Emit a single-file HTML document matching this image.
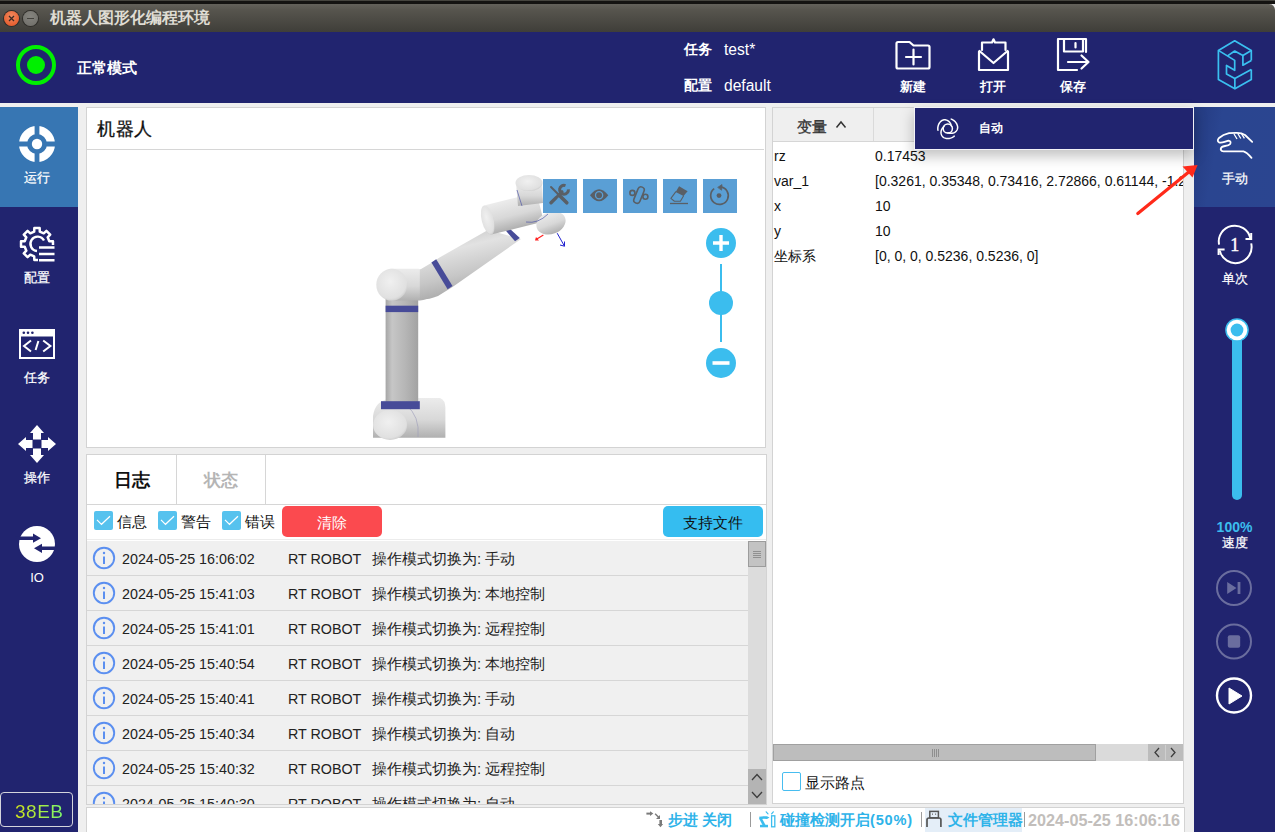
<!DOCTYPE html>
<html><head><meta charset="utf-8">
<style>
*{box-sizing:border-box;margin:0;padding:0}
html,body{width:1275px;height:832px;overflow:hidden;background:#efefef;font-family:"Liberation Sans",sans-serif;color:#222}
.a{position:absolute}
.w{color:#fff}
.ws{-webkit-text-stroke:0.25px #fff}
.b{font-weight:bold}
svg{position:absolute;overflow:visible}
</style></head><body>
<!-- title bar -->
<div class="a" style="left:0;top:0;width:1275px;height:1px;background:#45443e"></div>
<div class="a" style="left:0;top:1px;width:1275px;height:3px;background:#141311"></div>
<div class="a" style="left:0;top:4px;width:1275px;height:28px;background:linear-gradient(#63615a,#57554e 20%,#3f3e39);border-top-right-radius:6px"></div>
<div class="a" style="left:4px;top:11px;width:15px;height:15px;border-radius:50%;background:radial-gradient(circle at 50% 35%,#f08a5f,#e4501f);box-shadow:0 0 0 1px #2f2e2a"></div>
<svg width="20" height="20" style="left:0;top:0"><path d="M9,16 L14,21 M14,16 L9,21" stroke="#3a2a24" stroke-width="1.3"/></svg>
<div class="a" style="left:23px;top:11px;width:15px;height:15px;border-radius:50%;background:radial-gradient(circle at 50% 35%,#85847e,#6d6c67);box-shadow:0 0 0 1px #2f2e2a"></div>
<div class="a" style="left:27px;top:17.8px;width:7px;height:1.3px;background:#44433e"></div>
<div class="a b" style="left:50px;top:8px;font-size:15.5px;line-height:19px;color:#dfdcd3;letter-spacing:0px">机器人图形化编程环境</div>

<!-- header -->
<div class="a" style="left:0;top:32px;width:1275px;height:71px;background:#21246f"></div>
<div class="a" style="left:16px;top:45px;width:40px;height:40px;border-radius:50%;border:4px solid #00f000"></div>
<div class="a" style="left:27px;top:56px;width:18px;height:18px;border-radius:50%;background:#00f000"></div>
<div class="a w b" style="left:77px;top:59.5px;font-size:14.6px;line-height:17px">正常模式</div>
<div class="a w b" style="left:684px;top:41px;font-size:14px;line-height:17px">任务</div>
<div class="a w" style="left:724px;top:41px;font-size:15.6px;line-height:17px">test*</div>
<div class="a w b" style="left:684px;top:77px;font-size:14px;line-height:17px">配置</div>
<div class="a w" style="left:724px;top:77px;font-size:15.6px;line-height:17px">default</div>
<div class="a w b" style="left:896px;top:79px;width:34px;text-align:center;font-size:13px;line-height:16px">新建</div>
<div class="a w b" style="left:976px;top:79px;width:34px;text-align:center;font-size:13px;line-height:16px">打开</div>
<div class="a w b" style="left:1056px;top:79px;width:34px;text-align:center;font-size:13px;line-height:16px">保存</div>
<svg width="1275" height="832" style="left:0;top:0" fill="none" stroke="#fff" stroke-width="2.2" stroke-linejoin="round" stroke-linecap="round">
  <!-- new folder -->
  <path d="M898,42 h11.5 l4,3.5 h14.5 a1.5,1.5 0 0 1 1.5,1.5 v20 a1.5,1.5 0 0 1 -1.5,1.5 h-30 a1.5,1.5 0 0 1 -1.5,-1.5 v-23.5 a1.5,1.5 0 0 1 1.5,-1.5z"/>
  <path d="M906,57 h15 M913.5,49.5 v15"/>
  <!-- open envelope -->
  <path d="M982,50 v-7.5 h10 l1.5,-3.2 l1.5,3.2 h10.5 v7.5"/>
  <path d="M979,51.5 v18.5 h29 v-18.5 M979.5,51 l14,12 l14,-12"/>
  <!-- save -->
  <path d="M1077,70 h-19 v-31 h28 v13"/>
  <path d="M1064,39 v12.5 h19 v-12.5 M1075.5,43 v4.5"/>
  <path d="M1068,62 h20.5 M1081.5,55.5 l7,6.5 l-7,6.5"/>
  <!-- logo -->
  <g stroke="#3ac0f0" stroke-width="1.7" stroke-linecap="butt">
    <path d="M1251.3,60.6 L1251.3,50.5 L1234.7,40.8 L1218.4,50.4 L1218.4,79.6 L1234.9,88.8 L1251.3,79.6 L1251.3,69.5"/>
    <path d="M1218.4,50.4 L1234.7,60.4 L1234.7,70.3 L1226.5,65.5 L1226.5,74 L1234.8,78.6 L1251.3,69.5"/>
    <path d="M1234.8,78.6 L1234.9,88.8"/>
    <path d="M1227.5,55.9 L1234.7,51 L1242.9,55.6 L1251.3,50.5"/>
    <path d="M1242.9,55.6 L1242.9,65.2 L1251.3,60.6"/>
  </g>
</svg>

<!-- left sidebar -->
<div class="a" style="left:0;top:107px;width:78px;height:725px;background:#21246f"></div>
<div class="a" style="left:0;top:107px;width:78px;height:100px;background:#3776b3"></div>
<div class="a w ws" style="left:0;top:170px;width:74px;text-align:center;font-size:13px;line-height:16px">运行</div>
<div class="a w ws" style="left:0;top:270px;width:74px;text-align:center;font-size:13px;line-height:16px">配置</div>
<div class="a w ws" style="left:0;top:370px;width:74px;text-align:center;font-size:13px;line-height:16px">任务</div>
<div class="a w ws" style="left:0;top:470px;width:74px;text-align:center;font-size:13px;line-height:16px">操作</div>
<div class="a w" style="left:0;top:570px;width:74px;text-align:center;font-size:13px;line-height:16px">IO</div>
<div class="a" style="left:0;top:792px;width:73px;height:35px;border:1.5px solid #d4d4dc;border-radius:4px"></div>
<div class="a" style="left:15px;top:800px;font-size:19px;letter-spacing:0.5px;line-height:24px;background:linear-gradient(90deg,#d2e21a,#7cf56c);-webkit-background-clip:text;background-clip:text;color:transparent">38EB</div>

<!-- right sidebar -->
<div class="a" style="left:1194px;top:107px;width:81px;height:725px;background:#21246f"></div>
<div class="a" style="left:1194px;top:107px;width:81px;height:100px;background:linear-gradient(100deg,#243a80,#2a4590 30%,#2b4590)"></div>
<div class="a w ws" style="left:1194px;top:170.5px;width:81px;text-align:center;font-size:13px;line-height:16px">手动</div>
<div class="a w ws" style="left:1194px;top:270.5px;width:81px;text-align:center;font-size:13px;line-height:16px">单次</div>
<div class="a b" style="left:1194px;top:520px;width:81px;text-align:center;font-size:14px;line-height:15px;color:#3bbdee">100%</div>
<div class="a w ws" style="left:1194px;top:535px;width:81px;text-align:center;font-size:13px;line-height:16px">速度</div>


<!-- robot panel -->
<div class="a" style="left:86px;top:107px;width:680px;height:341px;background:#fff;border:1px solid #d3d3d3"></div>

<svg width="1275" height="832" style="left:0;top:0">
<defs>
<linearGradient id="gcol" x1="0" x2="1" y1="0" y2="0"><stop offset="0" stop-color="#a6a6a6"/><stop offset="0.2" stop-color="#c6c6c6"/><stop offset="0.6" stop-color="#b6b6b6"/><stop offset="1" stop-color="#a2a2a2"/></linearGradient>
<linearGradient id="garm" x1="0" x2="0.35" y1="0" y2="1"><stop offset="0" stop-color="#bdbdbd"/><stop offset="0.35" stop-color="#e2e2e2"/><stop offset="0.7" stop-color="#c6c6c6"/><stop offset="1" stop-color="#a4a4a4"/></linearGradient>
<radialGradient id="gcap" cx="0.45" cy="0.4" r="0.7"><stop offset="0" stop-color="#f0f0f0"/><stop offset="0.75" stop-color="#e0e0e0"/><stop offset="1" stop-color="#bcbcbc"/></radialGradient>
<linearGradient id="gbody" x1="0" x2="0" y1="0" y2="1"><stop offset="0" stop-color="#ececec"/><stop offset="0.55" stop-color="#d8d8d8"/><stop offset="1" stop-color="#b0b0b0"/></linearGradient>
</defs>
<!-- base -->
<path d="M373,437.7 L373,416 Q375,400 392,398 L440,398 Q445.4,400 445.4,408 L445.4,437.7 Z" fill="url(#gbody)"/>
<ellipse cx="390.1" cy="425" rx="17" ry="15" fill="url(#gcap)"/>
<path d="M406,405 Q420,416 418,437" stroke="#9a9ab8" stroke-width="0.6" fill="none"/>
<!-- column -->
<rect x="385.6" y="298" width="32.6" height="104" fill="url(#gcol)"/>
<rect x="381" y="401.2" width="38.8" height="8" fill="#474b98"/>
<rect x="385.6" y="305.7" width="32.6" height="6.4" fill="#474b98"/>
<!-- shoulder housing -->
<path d="M390,268.7 L418,268.7 Q432,270 434,284 Q434,299 420,300.5 L390,300.5 Z" fill="url(#gbody)"/>
<ellipse cx="391.8" cy="284.7" rx="15.5" ry="16" fill="url(#gcap)"/>
<!-- upper arm -->
<path d="M419.8,269.8 L431.2,263 L439.5,257.5 L488,230 L521,239 L452.5,287 L438,296 Q428,300 419.8,299.5 Z" fill="url(#garm)"/>
<path d="M431.4,262.4 L436.2,259.2 L452.5,286 L447.6,289.2 Z" fill="#474b98"/>
<path d="M504.4,229 L509.3,228.3 L519.8,238 L515,241.3 Z" fill="#474b98"/>
<!-- elbow housing -->
<g transform="translate(512,214) rotate(-14)">
<rect x="-29" y="-15" width="58" height="30" rx="6" fill="url(#gbody)"/>
<ellipse cx="-25" cy="0" rx="6" ry="15" fill="url(#gcap)"/>
</g>
<!-- wrist 1 -->
<path d="M516,183 L542,183 L543,203 L518,206 Z" fill="url(#gbody)"/>
<ellipse cx="529" cy="183" rx="13.5" ry="8" fill="url(#gcap)"/>
<path d="M517,190 Q520,200 522,206" stroke="#5058a8" stroke-width="0.7" fill="none"/>
<!-- wrist 2 -->
<ellipse cx="551" cy="223" rx="15" ry="11" transform="rotate(-20 551 223)" fill="url(#gbody)"/>
<path d="M526,222 Q538,224 548,214" stroke="#5058a8" stroke-width="0.7" fill="none"/>
<!-- axes -->
<path d="M543.4,235 L536,239.5" stroke="#ff2020" stroke-width="1.2"/>
<path d="M536,237 L535,240.5 L539,240.5" fill="#ff2020"/>
<path d="M557.2,233.2 L564.5,246.2 M560,245 L564.5,246.2 L564.5,241.5" stroke="#2020d0" stroke-width="1" fill="none"/>
</svg>
<div class="a" style="left:97px;top:118px;font-size:18px;letter-spacing:0.6px;line-height:22px;-webkit-text-stroke:0.3px #111;color:#111">机器人</div>
<div class="a" style="left:87px;top:149px;width:677px;height:1px;background:#d6d6d6"></div>
<div class="a" style="left:543px;top:179px;width:34px;height:34px;background:#5a9fd5"></div>
<div class="a" style="left:583px;top:179px;width:34px;height:34px;background:#5a9fd5"></div>
<div class="a" style="left:623px;top:179px;width:34px;height:34px;background:#5a9fd5"></div>
<div class="a" style="left:663px;top:179px;width:34px;height:34px;background:#5a9fd5"></div>
<div class="a" style="left:703px;top:179px;width:34px;height:34px;background:#5a9fd5"></div>
<div class="a" style="left:706px;top:228px;width:30px;height:30px;border-radius:50%;background:#3bbdee"></div>
<div class="a" style="left:720px;top:264px;width:2.2px;height:78px;background:#3bbdee"></div>
<div class="a" style="left:709px;top:290.5px;width:24px;height:24px;border-radius:50%;background:#3bbdee"></div>
<div class="a" style="left:706px;top:348px;width:30px;height:30px;border-radius:50%;background:#3bbdee"></div>

<!-- log panel -->
<div class="a" style="left:86px;top:454px;width:681px;height:351px;background:#fff;border:1px solid #d3d3d3"></div>
<div class="a" style="left:87px;top:504px;width:679px;height:1px;background:#d6d6d6"></div>
<div class="a" style="left:176px;top:455px;width:1px;height:49px;background:#d6d6d6"></div>
<div class="a" style="left:265px;top:455px;width:1px;height:49px;background:#d6d6d6"></div>
<div class="a b" style="left:87px;top:470px;width:89px;text-align:center;font-size:18px;line-height:21px;color:#111">日志</div>
<div class="a b" style="left:177px;top:470px;width:88px;text-align:center;font-size:17px;line-height:21px;color:#b5b5b5">状态</div>
<div class="a" style="left:87px;top:539px;width:679px;height:1px;background:#ececec"></div>
<div class="a" style="left:282px;top:506px;width:100px;height:31px;border-radius:5px;background:#fb4a4f;color:#fff;font-size:15px;line-height:33px;text-align:center">清除</div>
<div class="a" style="left:663px;top:506px;width:100px;height:31px;border-radius:5px;background:#35bdf0;color:#111;font-size:15px;line-height:33px;text-align:center">支持文件</div>
<div class="a" style="left:117px;top:512.5px;font-size:14.8px;line-height:18px;color:#111">信息</div>
<div class="a" style="left:181px;top:512.5px;font-size:14.8px;line-height:18px;color:#111">警告</div>
<div class="a" style="left:245px;top:512.5px;font-size:14.8px;line-height:18px;color:#111">错误</div>
<div class="a" style="left:94px;top:511px;width:19px;height:19px;border-radius:2px;background:#56c2ee"></div>
<div class="a" style="left:158px;top:511px;width:19px;height:19px;border-radius:2px;background:#56c2ee"></div>
<div class="a" style="left:222px;top:511px;width:19px;height:19px;border-radius:2px;background:#56c2ee"></div>
<div id="rows" class="a" style="left:87px;top:541px;width:661px;height:263px;overflow:hidden;background:#f0f0f0">
<div class="a" style="left:0;top:0px;width:661px;height:35px;border-bottom:1px solid #d6d6d6"><div class="a" style="left:35px;top:9px;font-size:14.3px;line-height:18px;color:#222">2024-05-25 16:06:02</div><div class="a" style="left:201px;top:9px;font-size:14.3px;line-height:18px;color:#222">RT ROBOT</div><div class="a" style="left:285px;top:9px;font-size:14.3px;line-height:18px;color:#222;font-size:15px">操作模式切换为: 手动</div></div>
<div class="a" style="left:0;top:35px;width:661px;height:35px;border-bottom:1px solid #d6d6d6"><div class="a" style="left:35px;top:9px;font-size:14.3px;line-height:18px;color:#222">2024-05-25 15:41:03</div><div class="a" style="left:201px;top:9px;font-size:14.3px;line-height:18px;color:#222">RT ROBOT</div><div class="a" style="left:285px;top:9px;font-size:14.3px;line-height:18px;color:#222;font-size:15px">操作模式切换为: 本地控制</div></div>
<div class="a" style="left:0;top:70px;width:661px;height:35px;border-bottom:1px solid #d6d6d6"><div class="a" style="left:35px;top:9px;font-size:14.3px;line-height:18px;color:#222">2024-05-25 15:41:01</div><div class="a" style="left:201px;top:9px;font-size:14.3px;line-height:18px;color:#222">RT ROBOT</div><div class="a" style="left:285px;top:9px;font-size:14.3px;line-height:18px;color:#222;font-size:15px">操作模式切换为: 远程控制</div></div>
<div class="a" style="left:0;top:105px;width:661px;height:35px;border-bottom:1px solid #d6d6d6"><div class="a" style="left:35px;top:9px;font-size:14.3px;line-height:18px;color:#222">2024-05-25 15:40:54</div><div class="a" style="left:201px;top:9px;font-size:14.3px;line-height:18px;color:#222">RT ROBOT</div><div class="a" style="left:285px;top:9px;font-size:14.3px;line-height:18px;color:#222;font-size:15px">操作模式切换为: 本地控制</div></div>
<div class="a" style="left:0;top:140px;width:661px;height:35px;border-bottom:1px solid #d6d6d6"><div class="a" style="left:35px;top:9px;font-size:14.3px;line-height:18px;color:#222">2024-05-25 15:40:41</div><div class="a" style="left:201px;top:9px;font-size:14.3px;line-height:18px;color:#222">RT ROBOT</div><div class="a" style="left:285px;top:9px;font-size:14.3px;line-height:18px;color:#222;font-size:15px">操作模式切换为: 手动</div></div>
<div class="a" style="left:0;top:175px;width:661px;height:35px;border-bottom:1px solid #d6d6d6"><div class="a" style="left:35px;top:9px;font-size:14.3px;line-height:18px;color:#222">2024-05-25 15:40:34</div><div class="a" style="left:201px;top:9px;font-size:14.3px;line-height:18px;color:#222">RT ROBOT</div><div class="a" style="left:285px;top:9px;font-size:14.3px;line-height:18px;color:#222;font-size:15px">操作模式切换为: 自动</div></div>
<div class="a" style="left:0;top:210px;width:661px;height:35px;border-bottom:1px solid #d6d6d6"><div class="a" style="left:35px;top:9px;font-size:14.3px;line-height:18px;color:#222">2024-05-25 15:40:32</div><div class="a" style="left:201px;top:9px;font-size:14.3px;line-height:18px;color:#222">RT ROBOT</div><div class="a" style="left:285px;top:9px;font-size:14.3px;line-height:18px;color:#222;font-size:15px">操作模式切换为: 远程控制</div></div>
<div class="a" style="left:0;top:245px;width:661px;height:35px;border-bottom:1px solid #d6d6d6"><div class="a" style="left:35px;top:9px;font-size:14.3px;line-height:18px;color:#222">2024-05-25 15:40:30</div><div class="a" style="left:201px;top:9px;font-size:14.3px;line-height:18px;color:#222">RT ROBOT</div><div class="a" style="left:285px;top:9px;font-size:14.3px;line-height:18px;color:#222;font-size:15px">操作模式切换为: 自动</div></div>

</div>
<div class="a" style="left:748px;top:541px;width:18px;height:263px;background:#dcdcdc"></div>
<div class="a" style="left:748px;top:541px;width:18px;height:26px;background:#c3c3c3;border:1px solid #9c9c9c"></div>
<div class="a" style="left:748px;top:769px;width:18px;height:35px;background:#b4b4b4"></div>

<!-- variables panel -->
<div class="a" style="left:772px;top:107px;width:412px;height:697px;background:#fff;border:1px solid #d3d3d3"></div>
<div class="a" style="left:773px;top:108px;width:410px;height:34px;background:#efefef;border-bottom:1px solid #d6d6d6"></div>
<div class="a" style="left:873px;top:108px;width:1px;height:33px;background:#dadada"></div>
<div class="a" style="left:797px;top:117.5px;font-size:15px;line-height:18px;color:#333;-webkit-text-stroke:0.35px #333">变量</div>
<div class="a" style="left:773px;top:143px;width:410px;height:600px;overflow:hidden"><div class="a" style="left:1px;top:4px;font-size:14px;line-height:18px;color:#111;white-space:nowrap">rz</div><div class="a" style="left:102px;top:4px;font-size:14px;line-height:18px;color:#111;white-space:nowrap">0.17453</div><div class="a" style="left:1px;top:29px;font-size:14px;line-height:18px;color:#111;white-space:nowrap">var_1</div><div class="a" style="left:102px;top:29px;font-size:14px;line-height:18px;color:#111;white-space:nowrap">[0.3261, 0.35348, 0.73416, 2.72866, 0.61144, -1.2</div><div class="a" style="left:1px;top:54px;font-size:14px;line-height:18px;color:#111;white-space:nowrap">x</div><div class="a" style="left:102px;top:54px;font-size:14px;line-height:18px;color:#111;white-space:nowrap">10</div><div class="a" style="left:1px;top:79px;font-size:14px;line-height:18px;color:#111;white-space:nowrap">y</div><div class="a" style="left:102px;top:79px;font-size:14px;line-height:18px;color:#111;white-space:nowrap">10</div><div class="a" style="left:1px;top:104px;font-size:14px;line-height:18px;color:#111;white-space:nowrap">坐标系</div><div class="a" style="left:102px;top:104px;font-size:14px;line-height:18px;color:#111;white-space:nowrap">[0, 0, 0, 0.5236, 0.5236, 0]</div></div>
<div class="a" style="left:773px;top:744px;width:410px;height:17px;background:#dadada"></div>
<div class="a" style="left:773px;top:744px;width:323px;height:17px;background:#bdbdbd;border:1px solid #a0a0a0"></div>
<div class="a" style="left:1148px;top:744px;width:35px;height:17px;background:#bcbcbc"></div>
<div class="a" style="left:782px;top:772px;width:19px;height:19px;border:1.5px solid #47bdf0;border-radius:2px;background:#fff"></div>
<div class="a" style="left:805px;top:774px;font-size:14.7px;line-height:18px;color:#111">显示路点</div>

<!-- status bar -->
<div class="a" style="left:86px;top:807px;width:1099px;height:26px;background:#fff;border:1px solid #d3d3d3"></div>
<div class="a b" style="left:668px;top:811px;font-size:14.6px;line-height:18px;color:#2eb3e9">步进 关闭</div>
<div class="a" style="left:750px;top:812px;width:1px;height:15px;background:#9a9a9a"></div>
<div class="a b" style="left:780px;top:811px;font-size:14.6px;line-height:18px;color:#2eb3e9">碰撞检测开启<span style="letter-spacing:0.8px">(50%)</span></div>
<div class="a" style="left:921px;top:812px;width:1px;height:14.5px;background:#9e9e9e"></div>
<div class="a" style="left:925px;top:808px;width:97px;height:24px;background:#e4eef8"></div>
<div class="a b" style="left:948px;top:811px;font-size:14.6px;line-height:18px;color:#2eb3e9">文件管理器</div>
<div class="a" style="left:1024px;top:812px;width:1px;height:15px;background:#9a9a9a"></div>
<div class="a b" style="left:1028px;top:810px;font-size:16.2px;line-height:20px;color:#c2bebb">2024-05-25 16:06:16</div>

<!-- popup -->
<div class="a" style="left:914px;top:107px;width:280px;height:43px;background:#21246f;border:1px solid #f2f2f6;box-shadow:0 6px 14px rgba(0,0,0,0.25)"></div>
<div class="a w b" style="left:979px;top:121px;font-size:12px;line-height:15px">自动</div>


<svg width="1275" height="832" style="left:0;top:0">
<!-- run target -->
<circle cx="37" cy="144" r="14" fill="none" stroke="#fff" stroke-width="8"/>
<rect x="34.6" y="124" width="4.8" height="40" fill="#3776b3"/>
<rect x="17" y="141.5" width="40" height="5" fill="#3776b3"/>
<circle cx="37" cy="144" r="5.2" fill="#fff"/>
<!-- gear -->
<path d="M34.19,231.72 L34.34,228.02 L39.66,228.02 L39.81,231.72 L43.70,233.33 L46.42,230.82 L50.18,234.58 L47.67,237.30 L49.28,241.19 L52.98,241.34 L52.98,246.66 L49.28,246.81 L47.67,250.70 L50.18,253.42 L46.42,257.18 L43.70,254.67 L39.81,256.28 L39.66,259.98 L34.34,259.98 L34.19,256.28 L30.30,254.67 L27.58,257.18 L23.82,253.42 L26.33,250.70 L24.72,246.81 L21.02,246.66 L21.02,241.34 L24.72,241.19 L26.33,237.30 L23.82,234.58 L27.58,230.82 L30.30,233.33Z" fill="none" stroke="#fff" stroke-width="2.5" stroke-linejoin="round"/>
<path d="M44,240.5 A7.2,7.2 0 1 0 37,251" fill="none" stroke="#fff" stroke-width="2.4"/>
<rect x="38" y="245" width="20" height="18" fill="#21246f"/>
<path d="M39,247.5 h15.5 M39,254 h15.5 M39,260.3 h15.5" stroke="#fff" stroke-width="2.5"/>
<!-- window code -->
<rect x="20" y="330" width="34" height="28" fill="none" stroke="#fff" stroke-width="2"/>
<rect x="19" y="329" width="36" height="7.5" fill="#fff"/>
<circle cx="23.8" cy="332.8" r="1.3" fill="#21246f"/><circle cx="28" cy="332.8" r="1.3" fill="#21246f"/><circle cx="32.4" cy="332.8" r="1.3" fill="#21246f"/>
<path d="M31,340.5 L24,346 L31,351.5 M38.4,341 L35.6,350 M43.2,340.5 L50.4,346 L43.2,351.5" fill="none" stroke="#fff" stroke-width="2"/>
<!-- move arrows -->
<g fill="#fff">
<path d="M37,425 L44,433 L41,433 L41,439.5 L33,439.5 L33,433 L30,433Z"/>
<path d="M37,463 L44,455 L41,455 L41,448.5 L33,448.5 L33,455 L30,455Z"/>
<path d="M18,444 L26,437 L26,440 L32.5,440 L32.5,448 L26,448 L26,451Z"/>
<path d="M56,444 L48,437 L48,440 L41.5,440 L41.5,448 L48,448 L48,451Z"/>
</g>
<!-- IO -->
<circle cx="37" cy="544" r="18" fill="#fff"/>
<path d="M15,536.6 h18 v-3 l8,4.6 l-8,4.6 v-2.8 h-18z" fill="#21246f"/>
<path d="M59,546.5 h-17 v-2.8 l-8,4.5 l8,4.7 v-2.9 h17z" fill="#21246f"/>

<!-- hand -->
<path d="M1252.2,141.9 L1245,135 Q1241.5,132.6 1236,132.8 L1229,133.2 Q1223,134.5 1219,138 Q1216.6,140.8 1219,142.3 Q1221,143 1224.5,141.8 L1228.4,140.6 Q1231.5,140.8 1230.2,144 Q1229,145.6 1225,146 Q1221,146.6 1220.7,149 L1221,150.2 Q1221.5,151.3 1223.5,151.3 L1243.5,151.3 Q1246.5,152 1251.5,157.8" fill="none" stroke="#fff" stroke-width="1.8" stroke-linejoin="round" stroke-linecap="round"/>
<path d="M1234,134 L1237,139 M1237.8,133.5 L1240.8,138.5 M1241.6,133.8 L1244.4,138.3" stroke="#fff" stroke-width="1.3"/>
<!-- repeat once -->
<path d="M1219,244.6 A16,16 0 0 1 1250.3,238" fill="none" stroke="#fff" stroke-width="2"/>
<path d="M1251.2,233 L1251.2,239 L1245.5,239" fill="none" stroke="#fff" stroke-width="2"/>
<path d="M1251.2,243.4 A16,16 0 0 1 1219.8,250.6" fill="none" stroke="#fff" stroke-width="2"/>
<path d="M1218.6,255 L1218.6,249.6 L1224.6,249.6" fill="none" stroke="#fff" stroke-width="2"/>
<text x="1234.8" y="250.6" font-family="Liberation Serif" font-size="18" fill="#fff" stroke="#fff" stroke-width="0.4" text-anchor="middle">1</text>
<!-- slider -->
<rect x="1232" y="330" width="10" height="170" rx="5" fill="#3bbdee"/>
<circle cx="1237" cy="330" r="11.8" fill="#3bbdee"/>
<circle cx="1237" cy="330" r="10.3" fill="#fff"/>
<circle cx="1237" cy="330" r="6.4" fill="#3bbdee"/>
<!-- step / stop / play -->
<circle cx="1234" cy="588" r="17" fill="none" stroke="#6a6d9e" stroke-width="2"/>
<path d="M1227.2,582 L1236.5,588 L1227.2,594Z M1237.6,582 h2.8 v12 h-2.8z" fill="#6a6d9e"/>
<circle cx="1234" cy="641.5" r="17" fill="none" stroke="#6a6d9e" stroke-width="2"/>
<rect x="1227.8" y="635.3" width="12.4" height="12.4" rx="2" fill="#6a6d9e"/>
<circle cx="1234" cy="695.5" r="17" fill="none" stroke="#fff" stroke-width="2.4"/>
<path d="M1229,688 L1242,696 L1229,704Z" fill="#fff" stroke="#fff" stroke-width="1" stroke-linejoin="round"/>

<!-- robot toolbar icons -->
<g fill="none" stroke="#595f66" stroke-linecap="round">
 <path d="M551,187 L560,196" stroke-width="1.9"/>
 <path d="M560.5,196.5 L566.8,202.8" stroke-width="3.6"/>
 <path d="M551,202.8 L556.2,197.6" stroke-width="3.4"/>
 <path d="M557.8,196 L562,191.8" stroke-width="3.2"/>
 <path d="M565.5,185.6 A4.4,4.4 0 1 0 568.4,189.3" stroke-width="3" stroke-linecap="butt"/>
 <path d="M590,195.3 Q599,183.2 608.3,195.3 Q599,207.4 590,195.3Z" fill="#595f66" stroke="none"/>
 <circle cx="599.1" cy="195.3" r="3.6" stroke="#5a9fd5" stroke-width="1.3"/>
 <circle cx="599.1" cy="195.3" r="2.3" fill="#595f66" stroke="none"/>
 <circle cx="632.4" cy="192.9" r="2.5" stroke-width="1.6"/>
 <circle cx="645.4" cy="196.7" r="2.5" stroke-width="1.6"/>
 <rect x="-3.2" y="-8.6" width="6.4" height="17.2" rx="3.2" transform="translate(639,195.1) rotate(22)" stroke-width="1.6"/>
 <path d="M679.1,186.2 L687.6,191.2 L683.5,196 L675.7,191.9Z" fill="#595f66" stroke="none"/>
 <path d="M675.7,191.9 L670.9,198.4 L674.4,201.2 L680.4,201.2 L683.5,196" stroke-width="1.1" stroke-linejoin="round"/>
 <path d="M670,203.5 h18" stroke-width="1.3" stroke-linecap="butt"/>
 <path d="M720.5,186.9 A8.8,8.8 0 1 1 714.2,188.6" stroke-width="1.7" stroke-linecap="butt"/>
 <path d="M718,187.2 L722,184.6 L721.6,189.8Z" fill="#595f66" stroke="#595f66" stroke-width="0.8" stroke-linejoin="round"/>
 <circle cx="719" cy="195.6" r="2.4" fill="#595f66" stroke="none"/>
</g>
<!-- zoom plus/minus -->
<path d="M713,243 h16 M721,235 v16" stroke="#fff" stroke-width="3.4"/>
<path d="M712.5,363 h17" stroke="#fff" stroke-width="3.6"/>

<!-- checkmarks -->
<path d="M97,519.8 L101.5,524.3 L110,516.3 M161,519.8 L165.5,524.3 L174,516.3 M225,519.8 L229.5,524.3 L238,516.3" fill="none" stroke="#fff" stroke-width="1.2"/>

<!-- spiral -->
<g fill="none" stroke="#fff" stroke-width="1.5" stroke-linecap="round">
<circle cx="947.8" cy="128.5" r="4.6"/>
<path d="M937.95,130.24 L937.85,129.55 L937.81,128.85 L937.81,128.15 L937.85,127.45 L937.95,126.76 L938.10,126.08 L938.29,125.41 L938.53,124.75 L938.81,124.12 L939.14,123.50 L939.51,122.91 L939.92,122.34 L940.37,121.81 L940.85,121.31 L941.39,120.86 L941.98,120.49 L942.61,120.19 L943.27,119.99 L943.95,119.86 L944.64,119.81 L945.32,119.85 L945.98,119.96 L946.62,120.13 L947.23,120.37 L947.80,120.66 L948.32,121.00 L948.80,121.37 L949.23,121.77 L949.61,122.20 L949.94,122.63 L950.22,123.07 L950.46,123.50 L950.66,123.92 L950.83,124.33 L950.98,124.71 L951.10,125.08 L951.22,125.42 L951.34,125.73 L951.47,126.03 L951.61,126.30"/>
<path d="M951.22,119.10 L951.87,119.36 L952.49,119.67 L953.10,120.02 L953.68,120.41 L954.23,120.84 L954.75,121.31 L955.23,121.81 L955.68,122.34 L956.09,122.91 L956.46,123.50 L956.79,124.12 L957.07,124.75 L957.31,125.41 L957.50,126.08 L957.62,126.77 L957.65,127.46 L957.59,128.16 L957.44,128.84 L957.21,129.49 L956.90,130.11 L956.53,130.68 L956.11,131.20 L955.64,131.67 L955.13,132.07 L954.59,132.42 L954.04,132.71 L953.47,132.93 L952.91,133.10 L952.36,133.22 L951.82,133.29 L951.30,133.31 L950.80,133.30 L950.33,133.27 L949.90,133.21 L949.49,133.14 L949.11,133.07 L948.76,133.01 L948.43,132.95 L948.11,132.91 L947.80,132.90"/>
<path d="M954.23,136.16 L953.68,136.59 L953.10,136.98 L952.49,137.33 L951.87,137.64 L951.22,137.90 L950.56,138.11 L949.88,138.28 L949.19,138.40 L948.50,138.48 L947.80,138.50 L947.10,138.48 L946.41,138.40 L945.72,138.28 L945.04,138.11 L944.39,137.87 L943.77,137.55 L943.20,137.15 L942.69,136.68 L942.24,136.15 L941.86,135.58 L941.55,134.97 L941.31,134.35 L941.14,133.70 L941.04,133.06 L941.01,132.42 L941.04,131.80 L941.12,131.20 L941.26,130.63 L941.44,130.09 L941.65,129.58 L941.88,129.12 L942.14,128.70 L942.40,128.31 L942.67,127.96 L942.93,127.64 L943.18,127.35 L943.42,127.08 L943.63,126.82 L943.82,126.56 L943.99,126.30"/>
</g>
<!-- red arrow -->
<path d="M1137.8,213.6 L1190,171" stroke="#ff2a1a" stroke-width="3.2" stroke-linecap="round"/>
<path d="M1197.6,165 L1182.5,166.6 L1192.5,177.5Z" fill="#ff2a1a"/>
<!-- var header caret -->
<path d="M836.5,127.5 L841,122 L845.5,127.5" fill="none" stroke="#333" stroke-width="1.5"/>
<!-- log scrollbar grip & arrows -->
<path d="M753,551.5 h8 M753,553.5 h8 M753,555.5 h8 M753,557.5 h8" stroke="#8a8a8a" stroke-width="0.9"/>
<path d="M752,780 L757,774.5 L762,780 M752,792 L757,797.5 L762,792" fill="none" stroke="#3d3d3d" stroke-width="1.3"/>
<!-- var h-scroll grip & arrows -->
<path d="M932.5,749 v8 M934.5,749 v8 M936.5,749 v8 M938.5,749 v8" stroke="#8a8a8a" stroke-width="0.9"/>
<path d="M1159,748 L1155,752.5 L1159,757 M1171,748 L1175,752.5 L1171,757" fill="none" stroke="#3d3d3d" stroke-width="1.3"/>
<path d="M1165.5,745 v15" stroke="#cfcfcf" stroke-width="1"/>

<!-- status icons -->
<g fill="#7a7a7a">
<rect x="646.4" y="812.6" width="4" height="2"/><path d="M650,811.2 L653.3,813.6 L650,816Z"/>
<path d="M654.6,814.3 L655.6,813.3 L659.4,817.1 L658.4,818.1Z"/><path d="M660,815 L660,819 L656,819Z"/>
<rect x="659.4" y="820" width="2.6" height="4.3"/><path d="M657.8,824 L663.1,824 L660.5,827.2Z"/>
</g>
<g fill="#3bbdee">
<rect x="760" y="824.8" width="8" height="2.5"/>
<path d="M762.5,825 L759,818.5 L761.2,817 L765.5,825Z"/>
<path d="M759,816.8 Q763,816 767,816.2 L769.5,817.5 L767,819 Q763,818.5 760,819.2Z"/>
</g>
<rect x="771.6" y="815.8" width="3.2" height="11" fill="none" stroke="#3bbdee" stroke-width="1.3"/>
<path d="M766.2,811.8 L768,813.8 M773.3,811.8 L771.6,813.8" stroke="#3bbdee" stroke-width="1.2" stroke-linecap="round"/>
<path d="M927,827 L927,819.8 Q927,818 929,818 L939,818 Q940.9,818 940.9,819.8 L940.9,827" fill="none" stroke="#555" stroke-width="1.7"/>
<rect x="929.8" y="811.4" width="8.6" height="6.4" fill="none" stroke="#555" stroke-width="1.5"/>
<path d="M932.5,813.4 v1.6 M935.6,813.4 v1.6" stroke="#777" stroke-width="0.9"/>
<!-- info icons --><defs><clipPath id="lc"><rect x="87" y="541" width="661" height="263"/></clipPath></defs><g clip-path="url(#lc)">
<circle cx="104" cy="558" r="10.2" fill="none" stroke="#5b8ff0" stroke-width="1.9"/><rect x="103" y="556.5" width="2" height="7.5" fill="#5b8ff0"/><circle cx="104" cy="553" r="1.2" fill="#5b8ff0"/><circle cx="104" cy="593" r="10.2" fill="none" stroke="#5b8ff0" stroke-width="1.9"/><rect x="103" y="591.5" width="2" height="7.5" fill="#5b8ff0"/><circle cx="104" cy="588" r="1.2" fill="#5b8ff0"/><circle cx="104" cy="628" r="10.2" fill="none" stroke="#5b8ff0" stroke-width="1.9"/><rect x="103" y="626.5" width="2" height="7.5" fill="#5b8ff0"/><circle cx="104" cy="623" r="1.2" fill="#5b8ff0"/><circle cx="104" cy="663" r="10.2" fill="none" stroke="#5b8ff0" stroke-width="1.9"/><rect x="103" y="661.5" width="2" height="7.5" fill="#5b8ff0"/><circle cx="104" cy="658" r="1.2" fill="#5b8ff0"/><circle cx="104" cy="698" r="10.2" fill="none" stroke="#5b8ff0" stroke-width="1.9"/><rect x="103" y="696.5" width="2" height="7.5" fill="#5b8ff0"/><circle cx="104" cy="693" r="1.2" fill="#5b8ff0"/><circle cx="104" cy="733" r="10.2" fill="none" stroke="#5b8ff0" stroke-width="1.9"/><rect x="103" y="731.5" width="2" height="7.5" fill="#5b8ff0"/><circle cx="104" cy="728" r="1.2" fill="#5b8ff0"/><circle cx="104" cy="768" r="10.2" fill="none" stroke="#5b8ff0" stroke-width="1.9"/><rect x="103" y="766.5" width="2" height="7.5" fill="#5b8ff0"/><circle cx="104" cy="763" r="1.2" fill="#5b8ff0"/><circle cx="104" cy="803" r="10.2" fill="none" stroke="#5b8ff0" stroke-width="1.9"/><rect x="103" y="801.5" width="2" height="7.5" fill="#5b8ff0"/><circle cx="104" cy="798" r="1.2" fill="#5b8ff0"/>
</g>
</svg>
</body></html>
